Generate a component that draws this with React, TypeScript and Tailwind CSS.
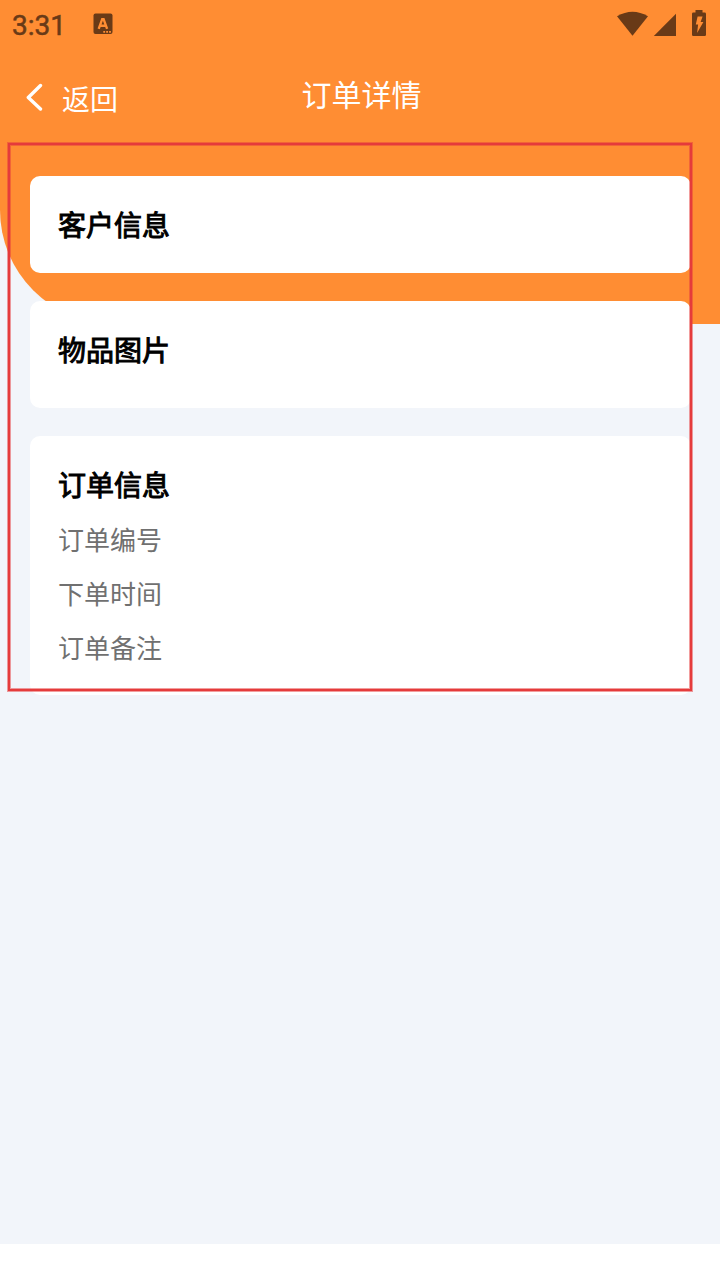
import type { ReactNode } from "react";

function StatusBar() {
  return (
    <div className="flex h-[48px] items-center text-[#693a17]">
      <span className="ml-[12px] mt-[3px] w-[81px] font-['Roboto',sans-serif] text-[28px] font-normal leading-[32px] [-webkit-text-stroke:0.5px_#693a17]">3:31</span>
      <svg width="20" height="22" viewBox="0 0 20 22" fill="currentColor">
        <rect x="0.5" y="0.5" width="19" height="20.5" rx="2" />
        <path d="M5.7 15.8 9.2 6.2H10.6L14.1 15.8M7.2 12.8h5.4" fill="none" stroke="#ff8d33" strokeWidth="2.4" />
        <path d="M10.3 18h1.8v1.8h-1.8zM13.2 18H15v1.8h-1.8zM16.1 18h1.8v1.8h-1.8z" fill="#ff8d33" />
      </svg>
      <div className="ml-auto flex h-[48px] w-[104px]">
        <svg width="104" height="48" viewBox="616 0 104 48" fill="currentColor">
          <path d="M617 16.2Q632.5 7.2 648 16.2L632.5 35.8Z" />
          <path d="M653.8 36 676 13.8V36Z" />
          <path d="M695.5 10h7v2.6h2.2q1.3 0 1.3 1.3v20.8q0 1.3-1.3 1.3h-11.4q-1.3 0-1.3-1.3V13.9q0-1.3 1.3-1.3h2.2Z" />
          <path d="M697.6 16.5h5l-2 5.5h2.8l-6.3 11 1-8.5h-2.3Z" fill="#ff8d33" />
        </svg>
      </div>
    </div>
  );
}

function Card({ title, className, children }: { title: string; className: string; children?: ReactNode }) {
  return (
    <section className={`rounded-[10px] bg-white px-[28px] pt-[27px] ${className}`}>
      <h2 className="text-[28px] font-normal leading-[42px] text-black [-webkit-text-stroke:1px_black]">{title}</h2>
      {children}
    </section>
  );
}

export default function App() {
  return (
    <div className="relative isolate flex h-[1280px] w-[720px] flex-col overflow-hidden bg-white font-['Noto_Sans_CJK_SC',sans-serif]">
      <div className="absolute inset-x-0 top-0 -z-10 h-[1244px] bg-[#f2f5fa]">
        <div className="h-[324px] rounded-bl-[114px] bg-[#ff8d33]" />
      </div>

      <StatusBar />

      <header className="grid h-[96px] grid-cols-3 text-white">
        <button className="flex items-start pl-[26px] text-left">
          <svg className="mt-[35px]" width="18" height="29" viewBox="0 0 18 29" fill="none" stroke="white" strokeWidth="3.4" strokeLinecap="round" strokeLinejoin="round">
            <path d="M14.5 2.5 2.3 14.5 14.5 26" />
          </svg>
          <span className="ml-[18px] mt-[29px] text-[28px] leading-[42px]">返回</span>
        </button>
        <h1 className="mt-[23px] pl-[3px] text-center text-[30px] leading-[44px]">订单详情</h1>
      </header>

      <main className="flex flex-col gap-[28px] pl-[30px] pr-[29px] pt-[32px]">
        <Card title="客户信息" className="h-[97px]" />
        <Card title="物品图片" className="h-[107px]" />
        <Card title="订单信息" className="h-[259px]">
          <div className="mt-[7px] flex flex-col text-[26px] leading-[54px] text-[#707070]">
            <span>订单编号</span>
            <span>下单时间</span>
            <span>订单备注</span>
          </div>
        </Card>
      </main>

      <div className="pointer-events-none absolute left-[8px] top-[143px] h-[548px] w-[684px] border-2 border-[#e53b3b] shadow-[0_0_0_1px_rgba(229,59,59,0.5),inset_0_0_0_1px_rgba(229,59,59,0.5)]" />
    </div>
  );
}
